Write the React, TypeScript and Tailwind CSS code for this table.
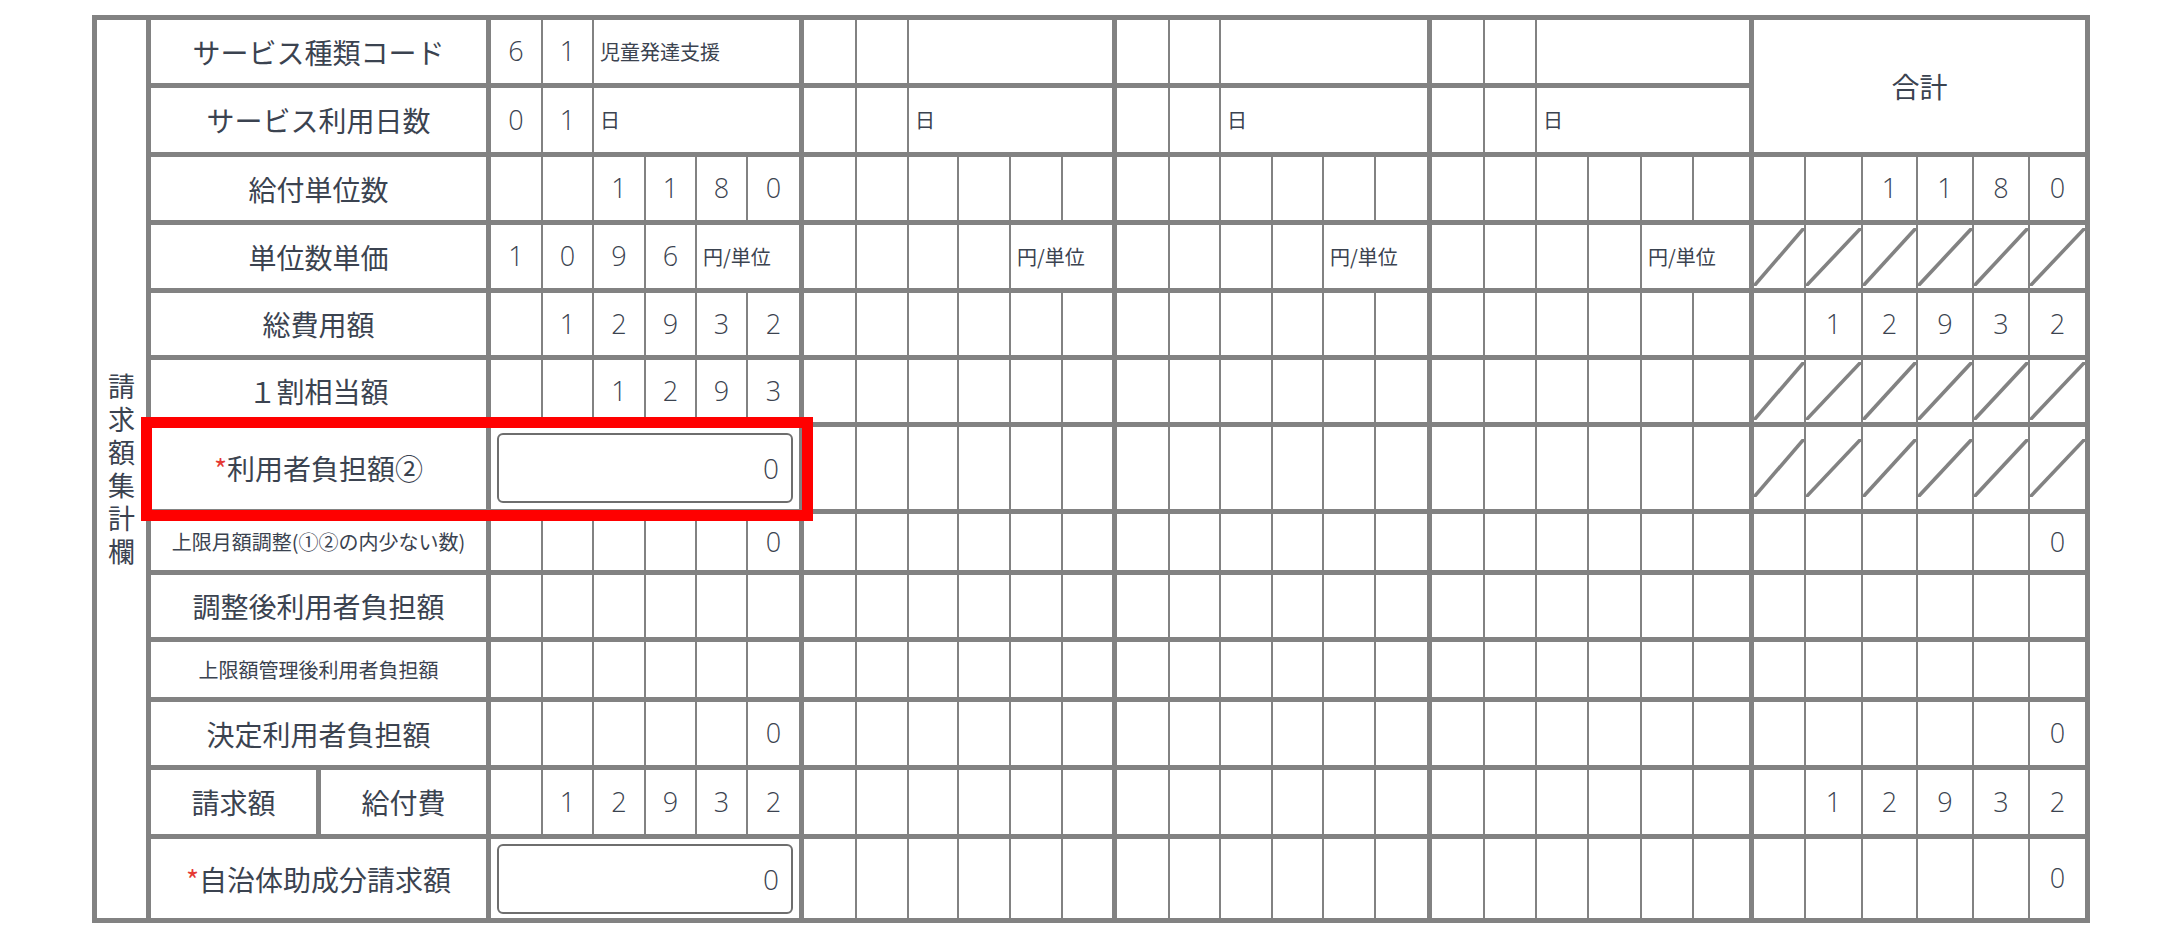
import React from "react";
import clsx from "clsx";

const JP = "font-['Noto_Sans_CJK_JP',sans-serif]";
const NUM = "font-['Open_Sans','Noto_Sans_CJK_JP',sans-serif] font-light";

// cell widths per section (border-left included)
const W = [
  ["w-[55px]", "w-[51px]", "w-[52px]", "w-[51px]", "w-[51px]", "w-[53px]"],
  ["w-[56px]", "w-[52px]", "w-[50px]", "w-[52px]", "w-[52px]", "w-[51px]"],
  ["w-[56px]", "w-[51px]", "w-[52px]", "w-[51px]", "w-[52px]", "w-[53px]"],
  ["w-[56px]", "w-[52px]", "w-[52px]", "w-[53px]", "w-[52px]", "w-[57px]"],
  ["w-[55px]", "w-[57px]", "w-[55px]", "w-[56px]", "w-[56px]", "w-[57px]"],
];
const M4 = ["w-[207px]", "w-[205px]", "w-[208px]", "w-[214px]"];
const M2 = ["w-[104px]", "w-[103px]", "w-[105px]", "w-[109px]"];

type CellProps = {
  w: string;
  first?: boolean;
  className?: string;
  children?: React.ReactNode;
};

function Cell({ w, first, className, children }: CellProps) {
  return (
    <div
      className={clsx(
        "flex h-full shrink-0 items-center justify-center border-[#828282]",
        w,
        first ? "border-l-[5px]" : "border-l-2",
        className
      )}
    >
      {children}
    </div>
  );
}

function Digits({ s, values = [] }: { s: number; values?: string[] }) {
  return (
    <>
      {W[s].map((w, i) => (
        <Cell key={i} w={w} first={i === 0} className={clsx(NUM, "text-[27px]")}>
          {values[i] ?? ""}
        </Cell>
      ))}
    </>
  );
}

function Slashes() {
  return (
    <>
      {W[4].map((w, i) => (
        <Cell key={i} w={w} first={i === 0}>
          <svg className="h-[58px] w-full" viewBox="0 0 50 58" preserveAspectRatio="none">
            <line x1="0" y1="58" x2="50" y2="0" stroke="#828282" strokeWidth="3.6" vectorEffect="non-scaling-stroke" />
          </svg>
        </Cell>
      ))}
    </>
  );
}

function Row({ h, top = true, children }: { h: string; top?: boolean; children: React.ReactNode }) {
  return <div className={clsx("flex border-[#828282]", top && "border-t-[5px]", h)}>{children}</div>;
}

function Label({ children, small, req }: { children: React.ReactNode; small?: boolean; req?: boolean }) {
  return (
    <Cell w="w-[340px]" first className={clsx(JP, small ? "text-[20px]" : "text-[28px]")}>
      {req && <span className="text-[#e53935]">*</span>}
      {children}
    </Cell>
  );
}

function Unit({ text }: { text: string }) {
  return <span className={clsx(JP, "self-center pl-[6px] text-[20px]")}>{text}</span>;
}

function CodeRow({ s, a, b, text }: { s: number; a?: string; b?: string; text?: string }) {
  return (
    <>
      <Cell w={W[s][0]} first className={clsx(NUM, "text-[27px]")}>{a}</Cell>
      <Cell w={W[s][1]} className={clsx(NUM, "text-[27px]")}>{b}</Cell>
      <Cell w={M4[s]} className="justify-start">
        {text && <Unit text={text} />}
      </Cell>
    </>
  );
}

function PriceRow({ s, values = [] }: { s: number; values?: string[] }) {
  return (
    <>
      {W[s].slice(0, 4).map((w, i) => (
        <Cell key={i} w={w} first={i === 0} className={clsx(NUM, "text-[27px]")}>
          {values[i] ?? ""}
        </Cell>
      ))}
      <Cell w={M2[s]} className="justify-start">
        <Unit text="円/単位" />
      </Cell>
    </>
  );
}

function InputCell() {
  return (
    <Cell w="w-[313px]" first>
      <input
        readOnly
        value="0"
        className={clsx(NUM, "h-[70px] w-[296px] rounded-md border-2 border-[#6e6e6e] bg-white pr-3 text-right text-[28px] text-[#3b4350] outline-none")}
      />
    </Cell>
  );
}

function Empty3() {
  return (
    <>
      <Digits s={1} />
      <Digits s={2} />
      <Digits s={3} />
    </>
  );
}

export default function App() {
  return (
    <div className="min-h-screen bg-white pl-[92px] pt-[15px] text-[#3b4350]">
      <div className="relative flex w-[1998px] border-[5px] border-[#828282]">
        <div className="flex w-[49px] shrink-0 items-center justify-center">
          <span className={clsx(JP, "pt-[6px] text-[27px] leading-[33px] tracking-[6px] [writing-mode:vertical-rl]")}>
            請求額集計欄
          </span>
        </div>

        <div className="flex flex-col">
          <div className="flex">
            <div className="flex flex-col">
              <Row h="h-[63px]" top={false}>
                <Label>サービス種類コード</Label>
                <CodeRow s={0} a="6" b="1" text="児童発達支援" />
                <CodeRow s={1} />
                <CodeRow s={2} />
                <CodeRow s={3} />
              </Row>
              <Row h="h-[69px]">
                <Label>サービス利用日数</Label>
                <CodeRow s={0} a="0" b="1" text="日" />
                <CodeRow s={1} text="日" />
                <CodeRow s={2} text="日" />
                <CodeRow s={3} text="日" />
              </Row>
            </div>
            <Cell w="w-[336px]" first className={clsx(JP, "h-[132px] text-[28px]")}>
              合計
            </Cell>
          </div>

          <Row h="h-[68px]">
            <Label>給付単位数</Label>
            <Digits s={0} values={["", "", "1", "1", "8", "0"]} />
            <Empty3 />
            <Digits s={4} values={["", "", "1", "1", "8", "0"]} />
          </Row>

          <Row h="h-[68px]">
            <Label>単位数単価</Label>
            <PriceRow s={0} values={["1", "0", "9", "6"]} />
            <PriceRow s={1} />
            <PriceRow s={2} />
            <PriceRow s={3} />
            <Slashes />
          </Row>

          <Row h="h-[67px]">
            <Label>総費用額</Label>
            <Digits s={0} values={["", "1", "2", "9", "3", "2"]} />
            <Empty3 />
            <Digits s={4} values={["", "1", "2", "9", "3", "2"]} />
          </Row>

          <Row h="h-[67px]">
            <Label>１割相当額</Label>
            <Digits s={0} values={["", "", "1", "2", "9", "3"]} />
            <Empty3 />
            <Slashes />
          </Row>

          <Row h="h-[87px]">
            <Label req>利用者負担額②</Label>
            <InputCell />
            <Empty3 />
            <Slashes />
          </Row>

          <Row h="h-[61px]">
            <Label small>上限月額調整(①②の内少ない数)</Label>
            <Digits s={0} values={["", "", "", "", "", "0"]} />
            <Empty3 />
            <Digits s={4} values={["", "", "", "", "", "0"]} />
          </Row>

          <Row h="h-[67px]">
            <Label>調整後利用者負担額</Label>
            <Digits s={0} />
            <Empty3 />
            <Digits s={4} />
          </Row>

          <Row h="h-[60px]">
            <Label small>上限額管理後利用者負担額</Label>
            <Digits s={0} />
            <Empty3 />
            <Digits s={4} />
          </Row>

          <Row h="h-[68px]">
            <Label>決定利用者負担額</Label>
            <Digits s={0} values={["", "", "", "", "", "0"]} />
            <Empty3 />
            <Digits s={4} values={["", "", "", "", "", "0"]} />
          </Row>

          <Row h="h-[69px]">
            <Cell w="w-[170px]" first className={clsx(JP, "text-[28px]")}>
              請求額
            </Cell>
            <Cell w="w-[170px]" first className={clsx(JP, "text-[28px]")}>
              給付費
            </Cell>
            <Digits s={0} values={["", "1", "2", "9", "3", "2"]} />
            <Empty3 />
            <Digits s={4} values={["", "1", "2", "9", "3", "2"]} />
          </Row>

          <Row h="h-[84px]">
            <Label req>自治体助成分請求額</Label>
            <InputCell />
            <Empty3 />
            <Digits s={4} values={["", "", "", "", "", "0"]} />
          </Row>
        </div>

        {/* annotation box */}
        <div className="pointer-events-none absolute left-[44px] top-[397px] h-[104px] w-[672px] border-[11px] border-[#ff0000]" />
      </div>
    </div>
  );
}
